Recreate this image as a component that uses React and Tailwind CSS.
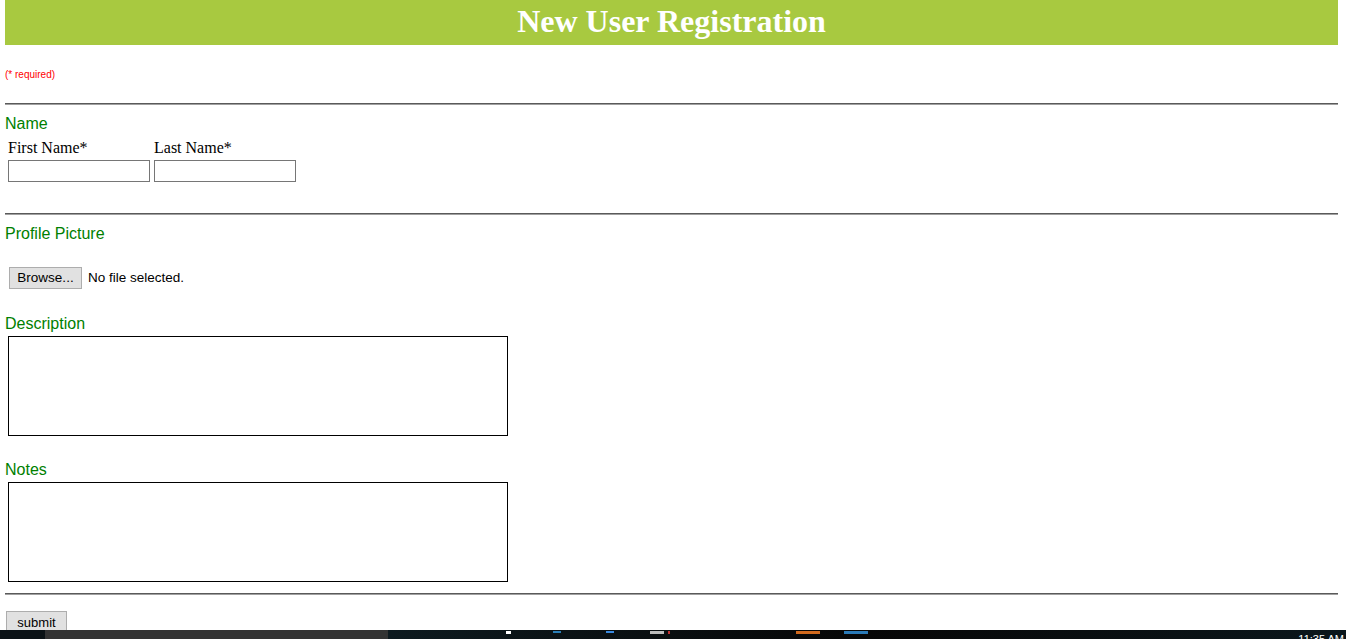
import React from 'react';

const Rule = () => (
  <div className="h-[2px] w-full border-t border-t-[#5a5a5a] border-b border-b-[#a0a0a0]" />
);

const SectionTitle = ({ children, className = '' }) => (
  <div className={`text-[16px] leading-[18px] text-[#008000] font-['Liberation_Sans',Arial,sans-serif] ${className}`}>{children}</div>
);

const App = () => {
  return (
    <div className="relative h-[639px] w-[1346px] overflow-hidden bg-white">
      <div className="ml-[5px] w-[1333px]">
        {/* header */}
        <div className="flex h-[45px] items-center justify-center bg-[#a8c940] pb-[4px]">
          <h1 className="font-['Liberation_Serif','Times_New_Roman',serif] text-[32px] font-bold leading-none text-white">
            New User Registration
          </h1>
        </div>

        <div className="mt-[24px] font-['Liberation_Sans',Arial,sans-serif] text-[10px] leading-[12px] text-[#ff0000]">(* required)</div>

        <div className="mt-[22px]"><Rule /></div>

        {/* name */}
        <SectionTitle className="mt-[10px]">Name</SectionTitle>
        <div className="mt-[6px] flex gap-[4px] pl-[3px] font-['Liberation_Serif','Times_New_Roman',serif] text-[16px] leading-[18px] text-black">
          <div className="flex flex-col gap-[3px]">
            <span>First Name*</span>
            <input type="text" className="h-[22px] w-[142px] border border-[#767676] bg-white" />
          </div>
          <div className="flex flex-col gap-[3px]">
            <span>Last Name*</span>
            <input type="text" className="h-[22px] w-[142px] border border-[#767676] bg-white" />
          </div>
        </div>

        <div className="mt-[31px]"><Rule /></div>

        {/* profile picture */}
        <SectionTitle className="mt-[10px]">Profile Picture</SectionTitle>
        <div className="mt-[24px] flex items-center gap-[6px] pl-[4px] font-['Liberation_Sans',Arial,sans-serif] text-[13.5px] text-black">
          <button className="h-[22px] w-[73px] border border-[#adadad] bg-[#e1e1e1] text-[13.5px] leading-none">Browse...</button>
          <span>No file selected.</span>
        </div>

        {/* description */}
        <SectionTitle className="mt-[26px]">Description</SectionTitle>
        <div className="mt-[3px] pl-[3px]">
          <textarea className="block h-[100px] w-[500px] resize-none border border-black bg-white" />
        </div>

        {/* notes */}
        <SectionTitle className="mt-[25px]">Notes</SectionTitle>
        <div className="mt-[3px] pl-[3px]">
          <textarea className="block h-[100px] w-[500px] resize-none border border-black bg-white" />
        </div>

        <div className="mt-[11px]"><Rule /></div>

        <div className="mt-[14px] pl-[1px]">
          <button className="h-[24px] w-[61px] border border-[#adadad] bg-[#e1e1e1] font-['Liberation_Sans',Arial,sans-serif] text-[13px] text-black">submit</button>
        </div>
      </div>

      {/* OS taskbar peeking in at the bottom */}
      <div className="absolute bottom-0 left-0 flex h-[9px] w-full bg-[#0d1519]">
        <div className="w-[45px] bg-[#0b1216]" />
        <div className="w-[343px] bg-[#333333]" />
        <div className="relative flex-1 overflow-hidden bg-gradient-to-r from-[#0d1a1f] via-[#070707] to-[#0b171c]">
          <span className="absolute left-[118px] top-[1px] h-[3px] w-[5px] bg-white" />
          <span className="absolute left-[165px] top-[1px] h-[2px] w-[8px] bg-[#2a7fb8]" />
          <span className="absolute left-[218px] top-[1px] h-[2px] w-[8px] bg-[#3a8ae0]" />
          <span className="absolute left-[262px] top-[1px] h-[3px] w-[14px] bg-[#bcbcbc]" />
          <span className="absolute left-[280px] top-[1px] h-[3px] w-[2px] bg-[#c23030]" />
          <span className="absolute left-[408px] top-[1px] h-[3px] w-[24px] bg-[#d26a1e]" />
          <span className="absolute left-[456px] top-[1px] h-[3px] w-[24px] bg-[#2a7ab8]" />
          <span className="absolute right-[2px] top-[4px] font-['Liberation_Sans',Arial,sans-serif] text-[11px] leading-none text-white">11:35 AM</span>
        </div>
      </div>
    </div>
  );
};

export default App;
